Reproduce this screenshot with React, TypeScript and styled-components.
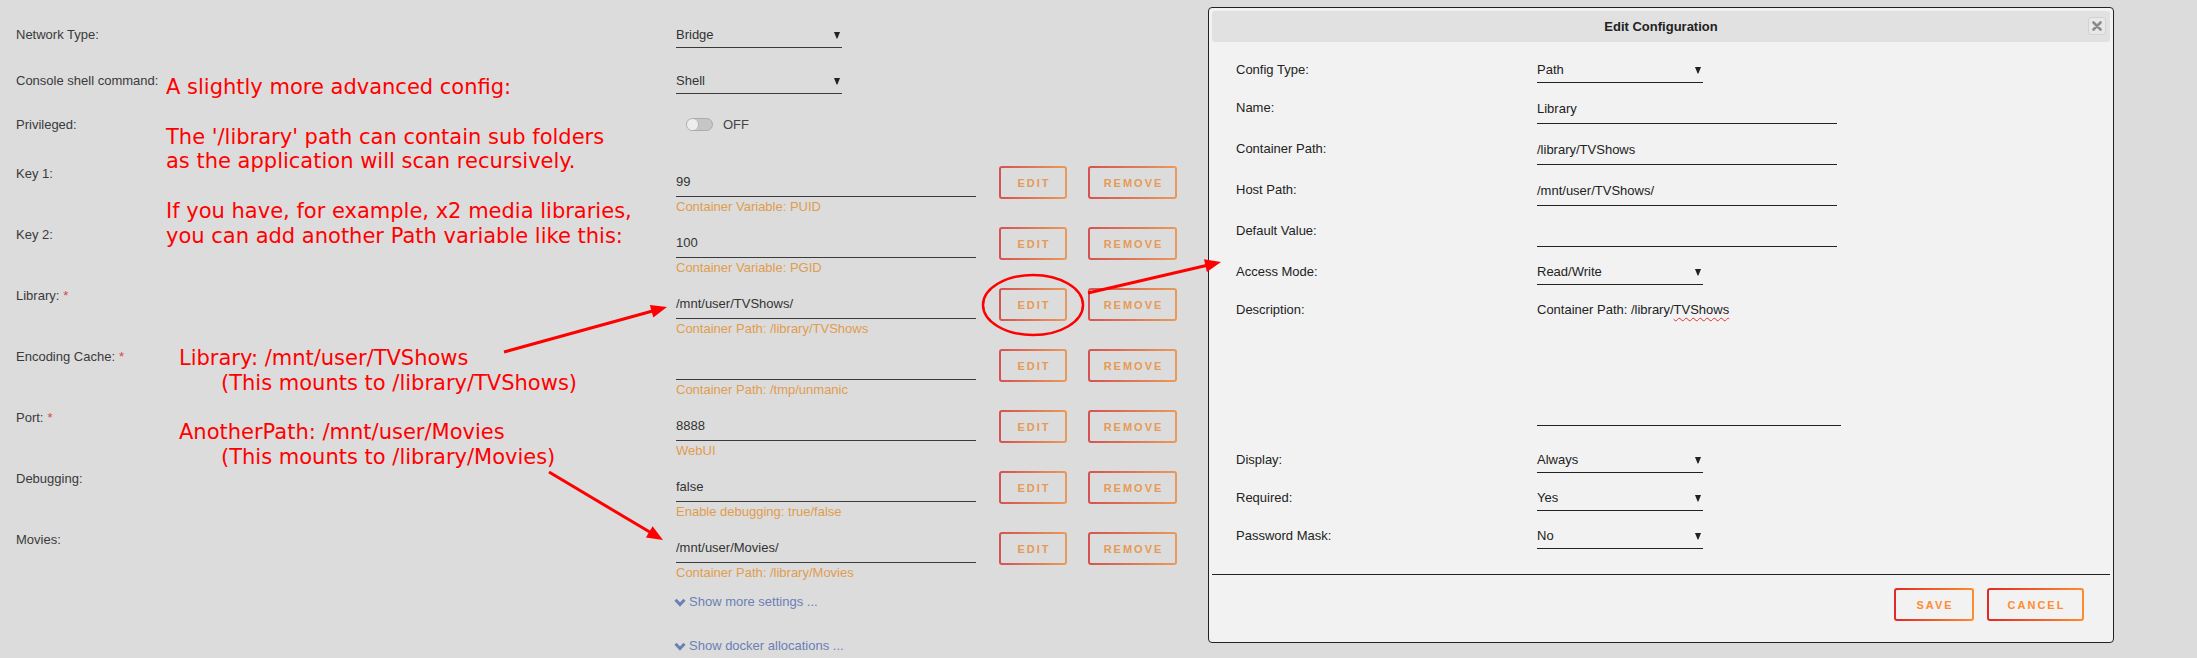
import React from 'react';
import styled, { createGlobalStyle } from 'styled-components';

const Global = createGlobalStyle`
  html, body { margin: 0; padding: 0; }
  body {
    background: #dcdcdc;
    font-family: "Liberation Sans", Arial, sans-serif;
    font-size: 13px;
    color: #333;
  }
`;

const Page = styled.div`
  position: relative;
  width: 2197px;
  height: 658px;
  overflow: hidden;
  background: #dcdcdc;
`;

const Form = styled.div`
  display: flex;
  flex-direction: column;
  padding: 27px 0 0 16px;
`;

const Row = styled.div<{ $h: number }>`
  display: grid;
  grid-template-columns: 660px auto;
  align-items: start;
  height: ${(p) => p.$h}px;
`;

const Label = styled.div`
  line-height: 16px;
  color: #3a3a3a;
  white-space: nowrap;
`;

const Star = styled.span`
  color: #d04a4a;
  margin-left: 4px;
`;

const SelectBox = styled.div<{ $dark?: boolean }>`
  box-sizing: border-box;
  width: 166px;
  height: 21px;
  padding-bottom: 4px;
  border-bottom: 1px solid ${(p) => (p.$dark ? '#222' : '#3a3a3a')};
  display: flex;
  align-items: center;
  justify-content: space-between;
  line-height: 16px;
  color: ${(p) => (p.$dark ? '#222' : '#333')};
`;

const CaretIcon = styled.svg`
  width: 6px;
  height: 8px;
  margin-right: 2px;
  flex: none;
`;

const Caret = () => (
  <CaretIcon viewBox="0 0 6 8">
    <path d="M0 1 H6 L3.4 7.5 H2.6 Z" fill="#222" />
  </CaretIcon>
);

const Select = ({ value, dark }: { value: string; dark?: boolean }) => (
  <SelectBox $dark={dark}>
    <span>{value}</span>
    <Caret />
  </SelectBox>
);

const SwitchWrap = styled.div`
  display: flex;
  align-items: center;
  gap: 10px;
  margin-left: 10px;
  line-height: 16px;
  color: #444;
`;

const Track = styled.span`
  box-sizing: border-box;
  width: 27px;
  height: 13px;
  margin-top: -1px;
  border: 1px solid #ababab;
  border-radius: 7px;
  background: #c6c6c6;
  display: flex;
  align-items: center;
`;

const Knob = styled.span`
  box-sizing: border-box;
  width: 12px;
  height: 11px;
  border-radius: 6px;
  background: #ededed;
  border-right: 1px solid #b5b5b5;
`;

const ValueCell = styled.div`
  display: flex;
  align-items: flex-start;
`;

const Field = styled.div`
  display: flex;
  flex-direction: column;
  width: 300px;
`;

const InputLine = styled.div`
  box-sizing: border-box;
  height: 31px;
  padding-top: 8px;
  line-height: 16px;
  border-bottom: 1px solid #3a3a3a;
  color: #333;
  white-space: nowrap;
`;

const Help = styled.div`
  margin-top: 2px;
  line-height: 16px;
  color: #e09c4f;
  white-space: nowrap;
`;

const Actions = styled.div`
  display: flex;
  gap: 21px;
  margin-left: 23px;
`;

const GradButton = styled.button<{ $w: number; $muted?: boolean }>`
  box-sizing: border-box;
  width: ${(p) => p.$w}px;
  height: 33px;
  padding: 0 0 0 2px;
  border: 2px solid transparent;
  border-radius: 3px;
  background: ${(p) =>
    p.$muted
      ? 'linear-gradient(#dcdcdc, #dcdcdc) padding-box, linear-gradient(90deg, #d45252, #e99a5a) border-box'
      : 'linear-gradient(#f2f2f2, #f2f2f2) padding-box, linear-gradient(90deg, #e22828, #ff8c2f) border-box'};
  font-family: "Liberation Sans", Arial, sans-serif;
  font-weight: bold;
  font-size: 11px;
  letter-spacing: 2px;
  text-transform: uppercase;
  color: ${(p) => (p.$muted ? '#e69a55' : '#ff8c2f')};
  cursor: pointer;
`;

const ShowLink = styled.div`
  display: flex;
  align-items: center;
  gap: 3px;
  margin-left: -2px;
  line-height: 18px;
  color: #6b80b6;
`;

const ChevronIcon = styled.svg`
  width: 12px;
  height: 9px;
  flex: none;
`;

const Chevron = () => (
  <ChevronIcon viewBox="0 0 12 9">
    <polyline points="1.5,1.8 6,6.5 10.5,1.8" fill="none" stroke="#6b80b6" strokeWidth="3" />
  </ChevronIcon>
);

/* ---------- Dialog ---------- */

const Dialog = styled.div`
  position: absolute;
  left: 1208px;
  top: 7px;
  width: 906px;
  height: 636px;
  box-sizing: border-box;
  border: 1px solid #222;
  border-radius: 4px;
  background: #f2f2f2;
  padding: 3px;
  display: flex;
  flex-direction: column;
  color: #222;
`;

const DialogHeader = styled.div`
  position: relative;
  height: 31px;
  flex: none;
  border-radius: 3px;
  background: #e1e1e1;
  display: flex;
  align-items: center;
  justify-content: center;
  font-weight: bold;
  color: #222;
`;

const CloseBtn = styled.button`
  position: absolute;
  right: 4px;
  top: 6px;
  width: 18px;
  height: 18px;
  box-sizing: border-box;
  padding: 0;
  border: 1px solid #d2d2d2;
  border-radius: 3px;
  background: #e8e8e8;
  display: flex;
  align-items: center;
  justify-content: center;
`;

const DialogBody = styled.div`
  box-sizing: border-box;
  height: 532px;
  flex: none;
  padding: 20px 0 0 24px;
  display: flex;
  flex-direction: column;
`;

const DRow = styled.div<{ $h: number }>`
  display: grid;
  grid-template-columns: 301px auto;
  align-items: start;
  height: ${(p) => p.$h}px;
`;

const DLabel = styled.div`
  line-height: 16px;
  color: #222;
  white-space: nowrap;
`;

const DInput = styled.div`
  box-sizing: border-box;
  width: 300px;
  height: 24px;
  padding-top: 1px;
  line-height: 16px;
  border-bottom: 1px solid #222;
  white-space: nowrap;
`;

const DTextarea = styled.div`
  box-sizing: border-box;
  width: 304px;
  height: 124px;
  line-height: 16px;
  border-bottom: 1px solid #222;
`;

const Misspelled = styled.span`
  text-decoration: underline wavy #e23030;
  text-decoration-thickness: 1px;
  text-underline-offset: 3px;
`;

const DialogFooter = styled.div`
  border-top: 1px solid #222;
  display: flex;
  justify-content: flex-end;
  gap: 13px;
  padding: 13px 26px 0 0;
`;

/* ---------- Annotations ---------- */

const Note = styled.div<{ $x: number; $y: number }>`
  position: absolute;
  left: ${(p) => p.$x}px;
  top: ${(p) => p.$y}px;
  font-family: "DejaVu Sans", sans-serif;
  font-size: 21px;
  line-height: 24.8px;
  color: #ff0000;
  white-space: pre;
  pointer-events: none;
`;

const NoteLine = styled.div<{ $indent?: number }>`
  padding-left: ${(p) => p.$indent || 0}px;
  height: 24.8px;
`;

const Overlay = styled.svg`
  position: absolute;
  left: 0;
  top: 0;
  width: 2197px;
  height: 658px;
  pointer-events: none;
`;

type VarRow = {
  label: string;
  required?: boolean;
  value: string;
  help: string;
};

const varRows: VarRow[] = [
  { label: 'Key 1:', value: '99', help: 'Container Variable: PUID' },
  { label: 'Key 2:', value: '100', help: 'Container Variable: PGID' },
  { label: 'Library:', required: true, value: '/mnt/user/TVShows/', help: 'Container Path: /library/TVShows' },
  { label: 'Encoding Cache:', required: true, value: '', help: 'Container Path: /tmp/unmanic' },
  { label: 'Port:', required: true, value: '8888', help: 'WebUI' },
  { label: 'Debugging:', value: 'false', help: 'Enable debugging: true/false' },
  { label: 'Movies:', value: '/mnt/user/Movies/', help: 'Container Path: /library/Movies' },
];

type DField =
  | { kind: 'select'; label: string; value: string; h: number }
  | { kind: 'input'; label: string; value: string; h: number }
  | { kind: 'textarea'; label: string; h: number };

const dialogFields: DField[] = [
  { kind: 'select', label: 'Config Type:', value: 'Path', h: 38 },
  { kind: 'input', label: 'Name:', value: 'Library', h: 41 },
  { kind: 'input', label: 'Container Path:', value: '/library/TVShows', h: 41 },
  { kind: 'input', label: 'Host Path:', value: '/mnt/user/TVShows/', h: 41 },
  { kind: 'input', label: 'Default Value:', value: '', h: 41 },
  { kind: 'select', label: 'Access Mode:', value: 'Read/Write', h: 38 },
  { kind: 'textarea', label: 'Description:', h: 150 },
  { kind: 'select', label: 'Display:', value: 'Always', h: 38 },
  { kind: 'select', label: 'Required:', value: 'Yes', h: 38 },
  { kind: 'select', label: 'Password Mask:', value: 'No', h: 38 },
];

const Arrow = ({ x1, y1, x2, y2 }: { x1: number; y1: number; x2: number; y2: number }) => {
  const dx = x2 - x1;
  const dy = y2 - y1;
  const len = Math.sqrt(dx * dx + dy * dy);
  const ux = dx / len;
  const uy = dy / len;
  const nx = -uy;
  const ny = ux;
  const hl = 16;
  const hw = 6.5;
  const bx = x2 - ux * hl;
  const by = y2 - uy * hl;
  const pts = `${x2},${y2} ${bx + nx * hw},${by + ny * hw} ${bx - nx * hw},${by - ny * hw}`;
  return (
    <g>
      <line x1={x1} y1={y1} x2={bx + ux * 2} y2={by + uy * 2} stroke="#ff0000" strokeWidth="3" />
      <polygon points={pts} fill="#ff0000" />
    </g>
  );
};

export default function App() {
  return (
    <Page>
      <Global />
      <Form>
        <Row $h={46}>
          <Label>Network Type:</Label>
          <Select value="Bridge" />
        </Row>
        <Row $h={44}>
          <Label>Console shell command:</Label>
          <Select value="Shell" />
        </Row>
        <Row $h={49}>
          <Label>Privileged:</Label>
          <SwitchWrap>
            <Track>
              <Knob />
            </Track>
            <span>OFF</span>
          </SwitchWrap>
        </Row>
        {varRows.map((r) => (
          <Row $h={61} key={r.label}>
            <Label>
              {r.label}
              {r.required && <Star>*</Star>}
            </Label>
            <ValueCell>
              <Field>
                <InputLine>{r.value}</InputLine>
                <Help>{r.help}</Help>
              </Field>
              <Actions>
                <GradButton $w={68} $muted>Edit</GradButton>
                <GradButton $w={89} $muted>Remove</GradButton>
              </Actions>
            </ValueCell>
          </Row>
        ))}
        <Row $h={44}>
          <span />
          <ShowLink>
            <Chevron />
            <span>Show more settings ...</span>
          </ShowLink>
        </Row>
        <Row $h={20}>
          <span />
          <ShowLink>
            <Chevron />
            <span>Show docker allocations ...</span>
          </ShowLink>
        </Row>
      </Form>

      <Note $x={166} $y={75}>
        <NoteLine>A slightly more advanced config:</NoteLine>
        <NoteLine />
        <NoteLine>The '/library' path can contain sub folders</NoteLine>
        <NoteLine>as the application will scan recursively.</NoteLine>
        <NoteLine />
        <NoteLine>If you have, for example, x2 media libraries,</NoteLine>
        <NoteLine>you can add another Path variable like this:</NoteLine>
      </Note>

      <Note $x={179} $y={346}>
        <NoteLine>Library: /mnt/user/TVShows</NoteLine>
        <NoteLine $indent={42}>(This mounts to /library/TVShows)</NoteLine>
        <NoteLine />
        <NoteLine>AnotherPath: /mnt/user/Movies</NoteLine>
        <NoteLine $indent={42}>(This mounts to /library/Movies)</NoteLine>
      </Note>

      <Dialog>
        <DialogHeader>
          Edit Configuration
          <CloseBtn aria-label="close">
            <svg width="10" height="10" viewBox="0 0 10 10">
              <path d="M1.5 1.5 L8.5 8.5 M8.5 1.5 L1.5 8.5" stroke="#8a8a8a" strokeWidth="2.6" strokeLinecap="round" />
            </svg>
          </CloseBtn>
        </DialogHeader>
        <DialogBody>
          {dialogFields.map((f) => (
            <DRow $h={f.h} key={f.label}>
              <DLabel>{f.label}</DLabel>
              {f.kind === 'select' && <Select value={f.value} dark />}
              {f.kind === 'input' && <DInput>{f.value}</DInput>}
              {f.kind === 'textarea' && (
                <DTextarea>
                  Container Path: /library/<Misspelled>TVShows</Misspelled>
                </DTextarea>
              )}
            </DRow>
          ))}
        </DialogBody>
        <DialogFooter>
          <GradButton $w={80}>Save</GradButton>
          <GradButton $w={97}>Cancel</GradButton>
        </DialogFooter>
      </Dialog>

      <Overlay viewBox="0 0 2197 658">
        <ellipse cx="1033" cy="305" rx="50" ry="30" fill="none" stroke="#ff0000" strokeWidth="2.5" />
        <Arrow x1={504} y1={352} x2={667} y2={307} />
        <Arrow x1={1088} y1={293} x2={1221} y2={262} />
        <Arrow x1={549} y1={472} x2={663} y2={540} />
      </Overlay>
    </Page>
  );
}
